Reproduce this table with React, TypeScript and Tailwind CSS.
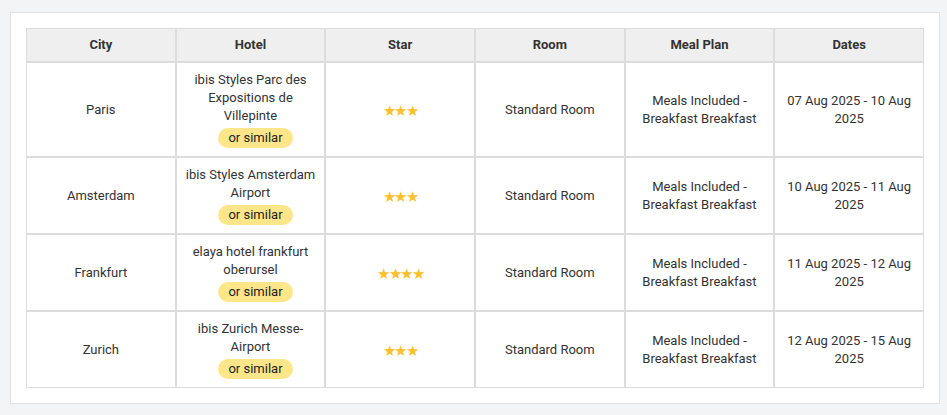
import React from 'react';

interface StayRow {
  city: string;
  hotel: string;
  stars: number;
  room: string;
  meal: string;
  dates: string;
}

const rows: StayRow[] = [
  { city: 'Paris', hotel: 'ibis Styles Parc des Expositions de Villepinte', stars: 3, room: 'Standard Room', meal: 'Meals Included - Breakfast Breakfast', dates: '07 Aug 2025 - 10 Aug 2025' },
  { city: 'Amsterdam', hotel: 'ibis Styles Amsterdam Airport', stars: 3, room: 'Standard Room', meal: 'Meals Included - Breakfast Breakfast', dates: '10 Aug 2025 - 11 Aug 2025' },
  { city: 'Frankfurt', hotel: 'elaya hotel frankfurt oberursel', stars: 4, room: 'Standard Room', meal: 'Meals Included - Breakfast Breakfast', dates: '11 Aug 2025 - 12 Aug 2025' },
  { city: 'Zurich', hotel: 'ibis Zurich Messe-Airport', stars: 3, room: 'Standard Room', meal: 'Meals Included - Breakfast Breakfast', dates: '12 Aug 2025 - 15 Aug 2025' },
];

const headers = ['City', 'Hotel', 'Star', 'Room', 'Meal Plan', 'Dates'];

const cell = 'border border-[#dcdcdc] px-2 py-2 text-center align-middle w-[149.67px]';

export default function App() {
  return (
    <div className="min-h-screen bg-[#f3f4f6] pt-3 pb-[11px] pl-[10px] text-[13px] leading-[18px] text-[#333]" style={{ fontFamily: 'Roboto, "Liberation Sans", sans-serif' }}>
      <div className="w-[930px] border border-[#e0e0e0] bg-white p-[15px]">
        <table className="w-[898px] table-fixed border-separate border-spacing-0">
          <thead>
            <tr>
              {headers.map((h) => (
                <th key={h} className={`${cell} h-[34px] py-[7px] bg-[#efefef] font-bold`}>
                  {h}
                </th>
              ))}
            </tr>
          </thead>
          <tbody>
            {rows.map((r) => (
              <tr key={r.city}>
                <td className={cell}>{r.city}</td>
                <td className={cell}>
                  <div>{r.hotel}</div>
                  <span className="ml-[10px] mt-[3px] inline-block rounded-full bg-[#fde68a] px-[10px] py-[1px] leading-[18px] text-[#222]">
                    or similar
                  </span>
                </td>
                <td className={cell}>
                  <span className="relative top-[2px] text-[15px] tracking-[-1.5px] text-[#fbc02d]">{'★'.repeat(r.stars)}</span>
                </td>
                <td className={cell}>{r.room}</td>
                <td className={cell}>
                  <div className="px-2">{r.meal}</div>
                </td>
                <td className={cell}>{r.dates}</td>
              </tr>
            ))}
          </tbody>
        </table>
      </div>
    </div>
  );
}
